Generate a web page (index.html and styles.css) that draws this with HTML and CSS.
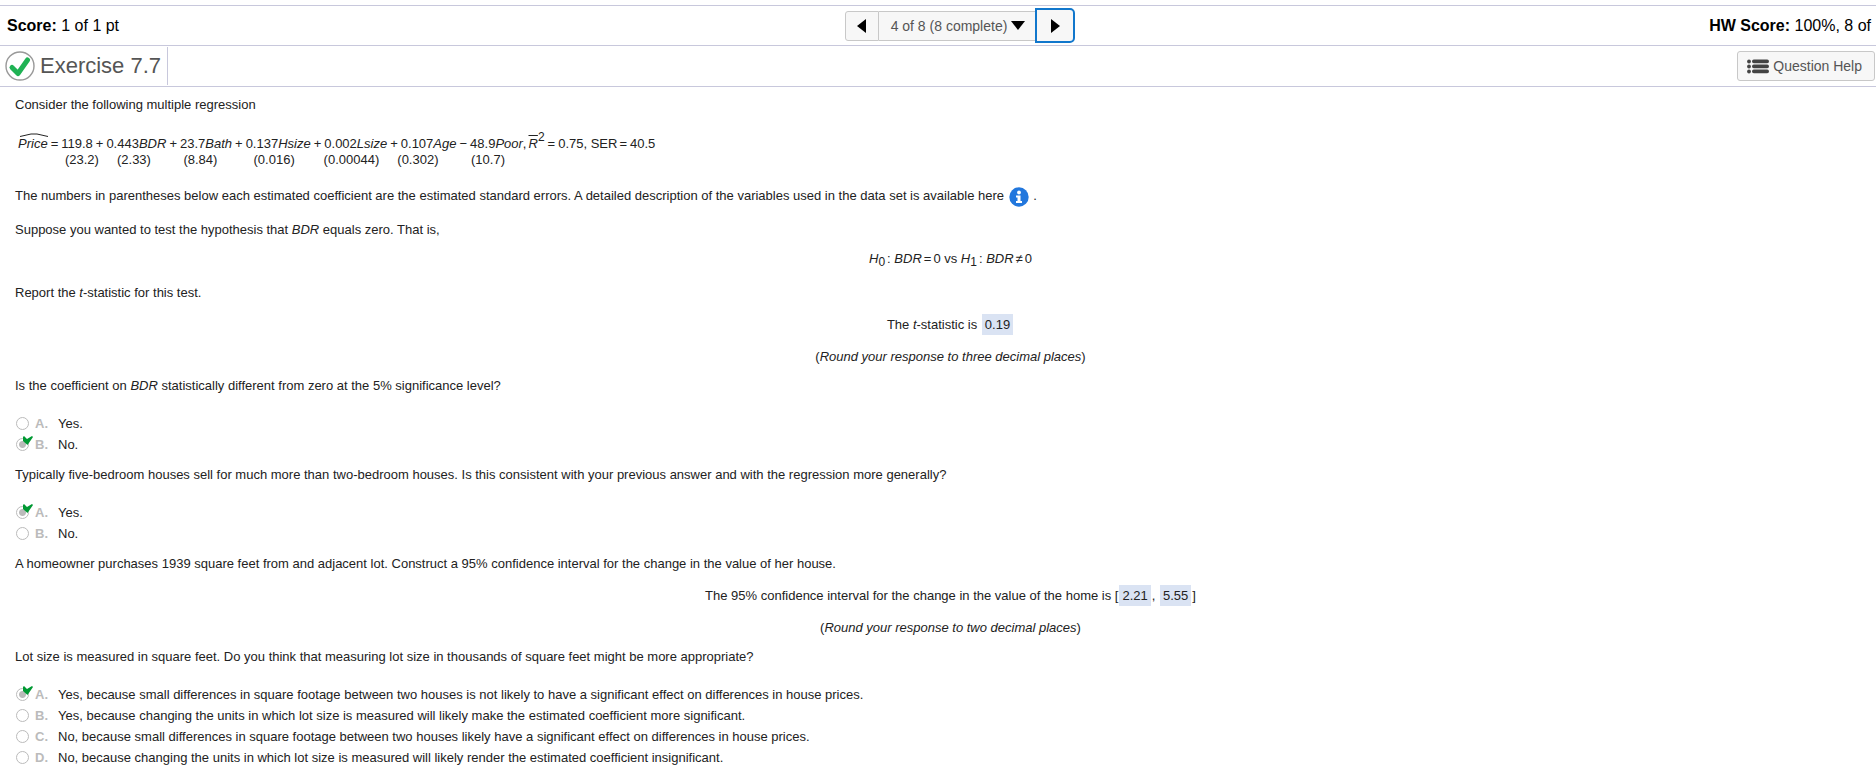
FILE: index.html
```html
<!DOCTYPE html>
<html lang="en">
<head>
<meta charset="utf-8">
<title>Exercise 7.7</title>
<link rel="stylesheet" href="styles.css">
</head>
<body>
<header class="score-bar">
  <div><strong>Score:</strong> 1 of 1 pt</div>
  <nav class="pager">
    <button class="pager-btn prev" aria-label="Previous question"><svg width="9" height="14" viewBox="0 0 9 14"><path d="M9 0v14L0 7z"/></svg></button>
    <button class="pager-btn list">4 of 8 (8 complete)<svg width="14" height="9" viewBox="0 0 14 9"><path d="M0 0h14L7 9z"/></svg></button>
    <button class="pager-btn next" aria-label="Next question"><svg width="9" height="14" viewBox="0 0 9 14"><path d="M0 0v14l9-7z"/></svg></button>
  </nav>
  <div class="hw-score"><strong>HW Score:</strong> 100%, 8 of</div>
</header>
<div class="title-bar">
  <div class="title-box">
    <svg width="30" height="30" viewBox="0 0 30 30"><circle cx="15" cy="15" r="14" fill="#fff" stroke="#999" stroke-width="1.4"/><path d="M7 16.500l6 6L22.500 9" fill="none" stroke="#1fb254" stroke-width="5" stroke-linecap="round" stroke-linejoin="round"/></svg>
    <h1>Exercise 7.7</h1>
  </div>
  <button class="help-btn"><svg width="22" height="15" viewBox="0 0 22 15" fill="#444"><circle cx="2" cy="2.500" r="1.900"/><circle cx="2" cy="7.500" r="1.900"/><circle cx="2" cy="12.500" r="1.900"/><rect x="5" y=".6" width="17" height="3.700" rx="1.800"/><rect x="5" y="5.600" width="17" height="3.700" rx="1.800"/><rect x="5" y="10.600" width="17" height="3.700" rx="1.800"/></svg>Question Help</button>
</div>
<main class="exercise">
  <p>Consider the following multiple regression</p>
  <div class="equation">
    <div class="eq-line">
      <span class="hat"><svg width="30" height="4" viewBox="0 0 30 4"><path d="M1 3.500L12 1h6l11 2.500" fill="none" stroke="#222"/></svg><i>Price</i></span>
      <span>=</span><span>119.8</span><span>+</span><span>0.443<i>BDR</i></span><span>+</span><span>23.7<i>Bath</i></span><span>+</span><span>0.137<i>Hsize</i></span><span>+</span><span>0.002<i>Lsize</i></span><span>+</span><span>0.107<i>Age</i></span><span>−</span><span class="last-term">48.9<i>Poor</i>,</span>
      <span><i class="bar">R</i><sup>2</sup></span><span>=</span><span class="last-term">0.75, SER</span><span>=</span><span>40.5</span>
    </div>
    <div class="eq-errors">             (23.2)     (2.33)         (8.84)          (0.016)        (0.00044)     (0.302)         (10.7)</div>
  </div>
  <p class="after-eq">The numbers in parentheses below each estimated coefficient are the estimated standard errors. A detailed description of the variables used in the data set is available here <button class="info" aria-label="Variable descriptions"><svg width="20" height="20" viewBox="0 0 20 20"><circle cx="10" cy="10" r="9.700" fill="#2277dd"/><g fill="#fff"><circle cx="10" cy="5.500" r="1.900"/><path d="M7 8.500h4.500v5.500H13v2H7v-2h1.500v-3.500H7z"/></g></svg></button> .</p>
  <p class="wide">Suppose you wanted to test the hypothesis that <i>BDR</i> equals zero. That is,</p>
  <p class="centered tight"><i>H</i><sub>0</sub>: <i>BDR</i><span class="op">=</span>0 vs <i>H</i><sub>1</sub>: <i>BDR</i><span class="op">≠</span>0</p>
  <p class="wide">Report the <i>t</i>-statistic for this test.</p>
  <p class="centered">The <i>t</i>-statistic is <span class="answer">0.19</span></p>
  <p class="centered">(<i>Round your response to three decimal places</i>)</p>
  <p class="tight" id="q1">Is the coefficient on <i>BDR</i> statistically different from zero at the 5% significance level?</p>
  <div class="choices" role="radiogroup" aria-labelledby="q1">
    <label class="choice"><input type="radio" name="q1" disabled><b>A.</b>Yes.</label>
    <label class="choice"><input type="radio" name="q1" checked disabled><svg class="tick" width="10" height="9" viewBox="0 0 10 9"><path d="M0 1l1-1 3 3L9 0l1 1-5.500 8L0 5z"/></svg><b>B.</b>No.</label>
  </div>
  <p class="tight" id="q2">Typically five-bedroom houses sell for much more than two-bedroom houses. Is this consistent with your previous answer and with the regression more generally?</p>
  <div class="choices" role="radiogroup" aria-labelledby="q2">
    <label class="choice"><input type="radio" name="q2" checked disabled><svg class="tick" width="10" height="9" viewBox="0 0 10 9"><path d="M0 1l1-1 3 3L9 0l1 1-5.500 8L0 5z"/></svg><b>A.</b>Yes.</label>
    <label class="choice"><input type="radio" name="q2" disabled><b>B.</b>No.</label>
  </div>
  <p class="tight">A homeowner purchases 1939 square feet from and adjacent lot. Construct a 95% confidence interval for the change in the value of her house.</p>
  <p class="centered">The 95% confidence interval for the change in the value of the home is [<span class="answer">2.21</span>, <span class="answer">5.55</span>]</p>
  <p class="centered">(<i>Round your response to two decimal places</i>)</p>
  <p class="tight" id="q3">Lot size is measured in square feet. Do you think that measuring lot size in thousands of square feet might be more appropriate?</p>
  <div class="choices" role="radiogroup" aria-labelledby="q3">
    <label class="choice"><input type="radio" name="q3" checked disabled><svg class="tick" width="10" height="9" viewBox="0 0 10 9"><path d="M0 1l1-1 3 3L9 0l1 1-5.500 8L0 5z"/></svg><b>A.</b>Yes, because small differences in square footage between two houses is not likely to have a significant effect on differences in house prices.</label>
    <label class="choice"><input type="radio" name="q3" disabled><b>B.</b>Yes, because changing the units in which lot size is measured will likely make the estimated coefficient more significant.</label>
    <label class="choice"><input type="radio" name="q3" disabled><b>C.</b>No, because small differences in square footage between two houses likely have a significant effect on differences in house prices.</label>
    <label class="choice"><input type="radio" name="q3" disabled><b>D.</b>No, because changing the units in which lot size is measured will likely render the estimated coefficient insignificant.</label>
  </div>
</main>
</body>
</html>
```
FILE: styles.css
```css
* { box-sizing: border-box; }
html { overflow: hidden; }
body { margin: 0; padding-top: 5px; background: #fff; color: #222; font: 13px/16px "Liberation Sans", Arial, sans-serif; overflow: hidden; }
p, h1 { margin: 0; }
button { font-family: inherit; }
svg { flex: none; }

/* header rows */
.score-bar { display: grid; grid-template-columns: 1fr auto 1fr; align-items: center; width: calc(100% + 44px); height: 41px; padding: 0 7px; border: solid #c8c8dc; border-width: 1px 0; font-size: 16px; color: #000; white-space: nowrap; }
.hw-score { padding-right: 42px; text-align: right; }
.pager { display: flex; align-items: center; }
.pager-btn { display: flex; align-items: center; justify-content: center; height: 30px; padding: 0; border: 1px solid #c8c8c8; background: #f7f7f7; color: #555; font-size: 14px; }
.pager-btn svg { fill: #000; }
.prev { width: 34px; border-radius: 3px 0 0 3px; }
.list { gap: 4px; padding: 0 10px 0 12px; border-left: 0; border-right: 0; }
.pager .next { width: 40px; height: 35px; border: 2px solid #1177cc; border-radius: 0 5px 5px 0; }
.title-bar { display: flex; align-items: center; justify-content: space-between; height: 41px; padding: 0 1px 0 5px; border-bottom: 1px solid #c8c8dc; }
.title-box { display: flex; align-items: center; gap: 5px; height: 38px; padding-right: 6px; border-right: 1px solid #c8c8dc; }
h1 { font-size: 22px; line-height: 28px; font-weight: normal; color: #555; }
.help-btn { display: flex; align-items: center; gap: 4px; height: 30px; padding: 0 12px 0 9px; border: 1px solid #c8c8c8; border-radius: 3px; background: #f7f7f7; color: #555; font-size: 14px; }

/* exercise text */
.exercise { width: calc(100% + 44px); padding: 10px 34px 9px 15px; }
.exercise p + p { margin-top: 16px; }
.exercise .tight, .exercise p + p.tight { margin-top: 13px; }
.exercise p.wide, .exercise p + p.wide { margin-top: 18px; }
.exercise .choices + p.tight { margin-top: 12px; }
.centered { text-align: center; }
sub, sup { font-size: 12px; line-height: 0; }
sub { margin-right: 2px; vertical-align: -3px; }
sup { vertical-align: 7px; }
.op { margin: 0 2px; }
.equation { margin-top: 23px; padding-left: 3px; white-space: nowrap; }
.eq-line { display: flex; gap: 3px; height: 16px; }
.last-term { margin-right: -1px; }
.eq-errors { white-space: pre; }
.hat { position: relative; }
.hat svg { position: absolute; left: 1px; top: -3px; }
.bar { text-decoration: overline; }
.after-eq { margin-top: 20px; }
.info { height: 20px; margin: -4px 1px; padding: 0; border: 0; background: none; vertical-align: middle; }
.info svg { display: block; }
.answer { margin: 0 1px; padding: 3px; background: #dae3f3; }

.choices { margin-top: 19px; }
.choice { display: flex; align-items: center; position: relative; height: 21px; padding-left: 1px; }
.choice b { width: 23px; color: #bbb; }
.choice input { appearance: none; width: 13px; height: 13px; margin: 0 6px 0 0; border: 1px solid #bbb; border-radius: 50%; background: #fff; }
.choice input:checked { background: radial-gradient(circle, #bbb 3px, #fff 4px); }
.tick { position: absolute; left: 8px; top: 2px; fill: #009933; }
```
